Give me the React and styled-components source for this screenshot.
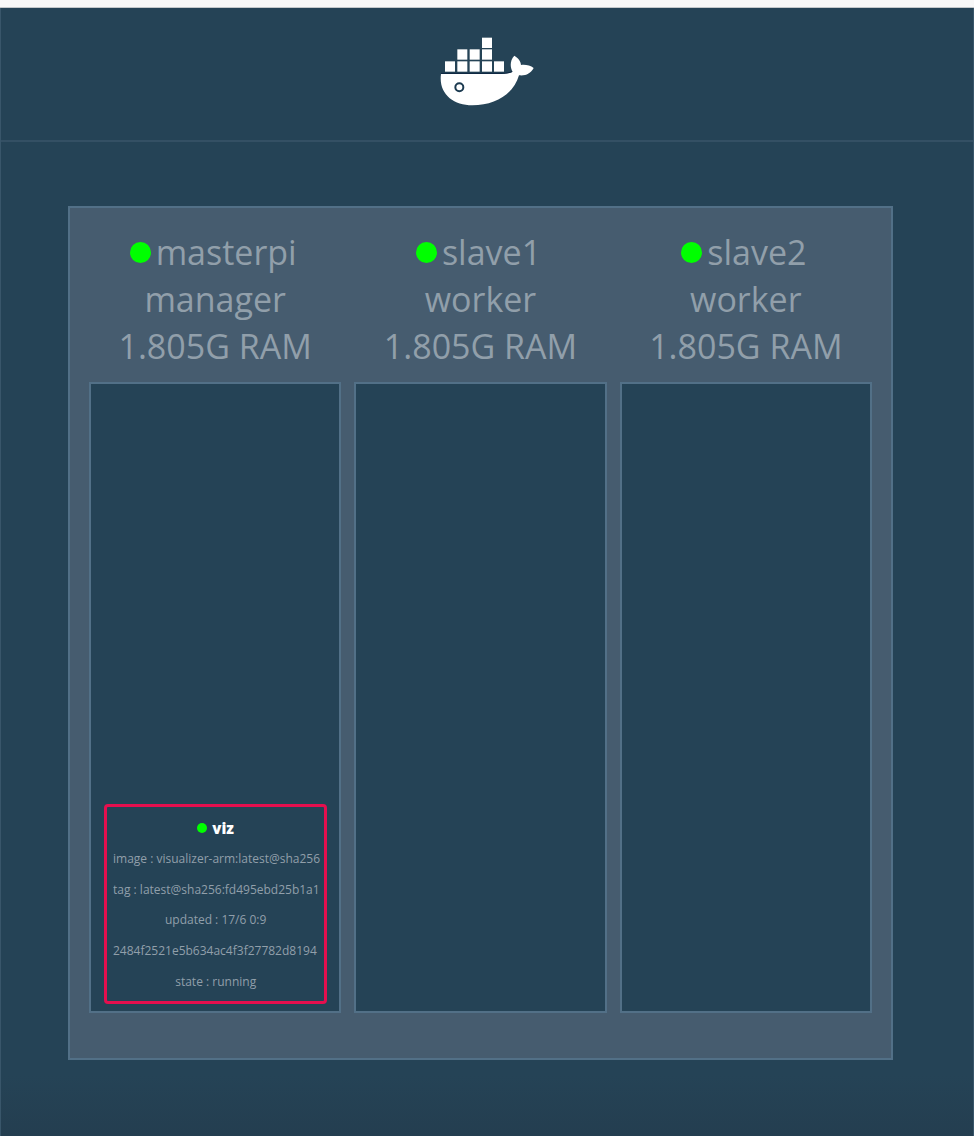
import React from "react";
import styled, { createGlobalStyle } from "styled-components";

const GlobalStyle = createGlobalStyle`
  *, *::before, *::after { box-sizing: border-box; }
  body {
    margin: 0;
    background: #254356;
    font-family: "Open Sans", sans-serif;
    color: #919faa;
  }
`;

const Page = styled.div`
  min-height: 100vh;
  display: flex;
  flex-direction: column;
`;

const TopStrip = styled.div`
  height: 8px;
  background: #f8f8f8;
  border-bottom: 1px solid #c4c8cb;
`;

const Body = styled.div`
  flex: 1;
  border: solid #39566a;
  border-width: 0 1px;
  background: linear-gradient(to top, #243e50, #254356 60px);
`;

const Header = styled.header`
  display: flex;
  justify-content: center;
  padding: 27px 0 33px;
  border-bottom: 2px solid #345064;
`;

const Logo = styled.svg`
  display: block;
  width: 96px;
  height: 72px;
`;

const Main = styled.main`
  padding: 64px 80px 76px 67px;
`;

const Cluster = styled.section`
  display: grid;
  grid-template-columns: repeat(3, minmax(0, 1fr));
  gap: 13px;
  padding: 21px 19px 45px;
  background: #465c6f;
  border: 2px solid #527087;
`;

const Node = styled.article`
  display: flex;
  flex-direction: column;
`;

const NodeHeading = styled.header`
  margin-bottom: 12px;
  font-size: 34px;
  line-height: 47px;
  text-align: center;
  white-space: nowrap;
`;

const NodeName = styled.h2`
  display: flex;
  align-items: center;
  justify-content: center;
  gap: 5px;
  margin: 0;
  padding-right: 4px;
  font: inherit;
`;

const NodeDetail = styled.div``;

const StatusDot = styled.span`
  flex: none;
  width: ${({ $size }) => $size}px;
  height: ${({ $size }) => $size}px;
  border-radius: 50%;
  background: #00ff00;
`;

const TaskArea = styled.div`
  display: flex;
  flex-direction: column;
  justify-content: flex-end;
  min-height: 631px;
  padding: 7px 12px 7px 13px;
  background: #254356;
  border: 2px solid #527087;
`;

const Task = styled.div`
  display: flex;
  flex-direction: column;
  justify-content: space-between;
  min-height: 200px;
  padding: 12px 0 10px 6px;
  border: 3px solid #e60f4e;
  border-radius: 4px;
  font-size: 12px;
  line-height: 18px;
`;

const TaskName = styled.h3`
  display: flex;
  align-items: center;
  justify-content: center;
  gap: 5px;
  margin: 0;
  padding-right: 6px;
  color: #ffffff;
  font-size: 15px;
  line-height: 18px;
  font-weight: 800;
`;

const TaskLine = styled.p`
  margin: 0 -3px 0 0;
  padding-right: ${({ $long }) => ($long ? 0 : 9)}px;
  overflow: hidden;
  text-align: ${({ $long }) => ($long ? "left" : "center")};
  white-space: nowrap;
`;

const nodes = [
  {
    name: "masterpi",
    role: "manager",
    ram: "1.805G RAM",
    tasks: [
      {
        name: "viz",
        lines: [
          { text: "image : visualizer-arm:latest@sha256", long: true },
          { text: "tag : latest@sha256:fd495ebd25b1a1", long: true },
          { text: "updated : 17/6 0:9" },
          { text: "2484f2521e5b634ac4f3f27782d8194", long: true },
          { text: "state : running" },
        ],
      },
    ],
  },
  { name: "slave1", role: "worker", ram: "1.805G RAM", tasks: [] },
  { name: "slave2", role: "worker", ram: "1.805G RAM", tasks: [] },
];

const containers = [
  [186, 53],
  [112, 88], [149, 88], [186, 88],
  [75, 124], [112, 124], [149, 124], [186, 124], [222, 124],
];

function DockerLogo() {
  return (
    <Logo viewBox="57 45 288 216" role="img" aria-label="Docker">
      {containers.map(([x, y]) => (
        <rect key={`${x}-${y}`} x={x} y={y} width="30" height="31" fill="#fff" />
      ))}
      <path
        d="M63 162H247C259 162 269 160 278 155C270 143 269 121 283 107C295 114 303 124 303 135C315 133 331 136 341 144C332 161 317 168 297 166C281 222 226 256 157 256C98 256 55 220 63 162Z"
        fill="#fff"
      />
      <path d="M63 160H248C258 160 268 158 276 155" fill="none" stroke="#0c2540" strokeWidth="3" />
      <circle cx="118" cy="202" r="12" fill="#fff" stroke="#1b3a50" strokeWidth="6" />
    </Logo>
  );
}

export default function App() {
  return (
    <Page>
      <GlobalStyle />
      <TopStrip />
      <Body>
        <Header>
          <DockerLogo />
        </Header>
        <Main>
          <Cluster>
            {nodes.map((node) => (
              <Node key={node.name}>
                <NodeHeading>
                  <NodeName>
                    <StatusDot $size={21} />
                    {node.name}
                  </NodeName>
                  <NodeDetail>{node.role}</NodeDetail>
                  <NodeDetail>{node.ram}</NodeDetail>
                </NodeHeading>
                <TaskArea>
                  {node.tasks.map((task) => (
                    <Task key={task.name}>
                      <TaskName>
                        <StatusDot $size={10} />
                        {task.name}
                      </TaskName>
                      {task.lines.map((line) => (
                        <TaskLine key={line.text} $long={line.long}>
                          {line.text}
                        </TaskLine>
                      ))}
                    </Task>
                  ))}
                </TaskArea>
              </Node>
            ))}
          </Cluster>
        </Main>
      </Body>
    </Page>
  );
}
